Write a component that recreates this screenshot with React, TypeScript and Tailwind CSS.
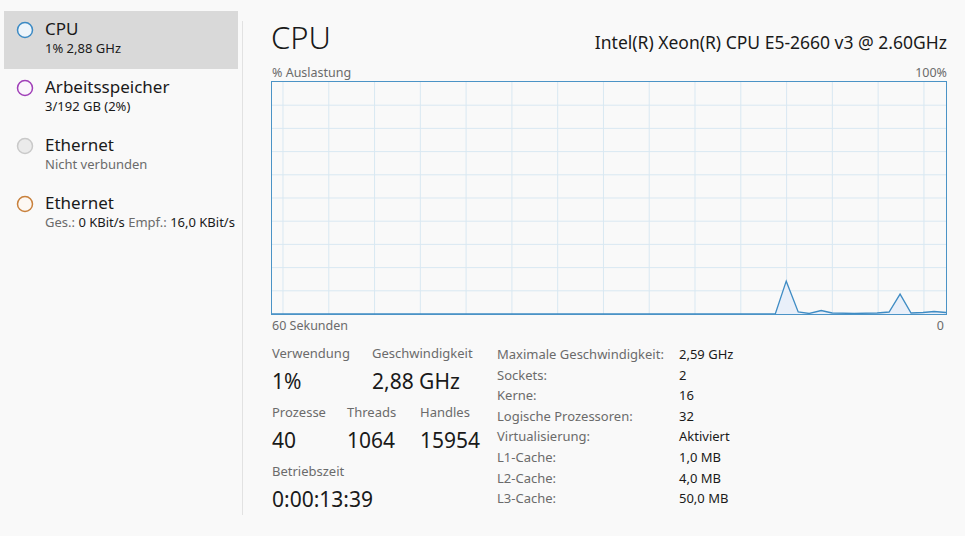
import React from 'react'

const font = { fontFamily: '"Noto Sans", "Open Sans", sans-serif' }

type Item = { title: string; sub: React.ReactNode; stroke: string; fill: string; active?: boolean }

const items: Item[] = [
  { title: 'CPU', sub: '1% 2,88 GHz', stroke: '#3b8ac4', fill: '#eef5fb', active: true },
  { title: 'Arbeitsspeicher', sub: '3/192 GB (2%)', stroke: '#a03fb8', fill: '#fbf6fc' },
  { title: 'Ethernet', sub: <span className="text-[#6b6b6b]">Nicht verbunden</span>, stroke: '#c9c9c9', fill: '#ebebeb' },
  {
    title: 'Ethernet',
    sub: (
      <>
        <span className="text-[#6b6b6b]">Ges.:</span> 0 KBit/s <span className="text-[#6b6b6b]">Empf.:</span> 16,0 KBit/s
      </>
    ),
    stroke: '#c8803c',
    fill: '#fdf8f3',
  },
]

const specs: [string, string][] = [
  ['Maximale Geschwindigkeit:', '2,59 GHz'],
  ['Sockets:', '2'],
  ['Kerne:', '16'],
  ['Logische Prozessoren:', '32'],
  ['Virtualisierung:', 'Aktiviert'],
  ['L1-Cache:', '1,0 MB'],
  ['L2-Cache:', '4,0 MB'],
  ['L3-Cache:', '50,0 MB'],
]

// Punkte der Auslastungskurve (x, y) relativ zum Diagramm 675x233
const pts: [number, number][] = [
  [0, 233], [504, 233], [515, 200], [527, 231], [538, 232.5], [550, 229.5], [561, 232],
  [583, 232.5], [606, 232], [618, 231], [629, 213], [640, 232], [652, 231.5], [663, 230.5], [675, 231.5],
]

function Chart() {
  const W = 675
  const H = 233
  const vlines = Array.from({ length: 15 }, (_, i) => 11 + i * 45.85)
  const hlines = Array.from({ length: 9 }, (_, i) => (i + 1) * (H / 10))
  const line = pts.map(([x, y]) => `${x},${y}`).join(' ')
  return (
    <div className="relative h-[234px] w-full border border-[#4b93c6]">
      <svg className="absolute inset-0 h-full w-full" viewBox={`0 0 ${W} ${H}`} preserveAspectRatio="none">
        {vlines.map((x) => (
          <line key={'v' + x} x1={x} y1={0} x2={x} y2={H} stroke="#d9e8f2" strokeWidth={1} />
        ))}
        {hlines.map((y) => (
          <line key={'h' + y} x1={0} y1={y} x2={W} y2={y} stroke="#d9e8f2" strokeWidth={1} />
        ))}
        <polygon points={`${line} ${W},${H} 0,${H}`} fill="#e9eff9" />
        <polyline points={line} fill="none" stroke="#3f8cc4" strokeWidth={1.3} />
      </svg>
    </div>
  )
}

function Stat({ label, value, className = '' }: { label: string; value: string; className?: string }) {
  return (
    <div className={className}>
      <div className="text-[13px] leading-[16px] text-[#6b6b6b]">{label}</div>
      <div className="mt-[7px] text-[21px] leading-[26px] text-[#1a1a1a]">{value}</div>
    </div>
  )
}

export default function App() {
  return (
    <div className="flex h-[536px] w-[965px] overflow-hidden bg-[#f9f9f9] text-[#1a1a1a]" style={font}>
      {/* Seitenleiste */}
      <div className="w-[242px] shrink-0 pl-[4px] pt-[11px]">
        {items.map((it, i) => (
          <div
            key={i}
            className={`flex h-[58px] w-[234px] items-start gap-[11px] pl-[12px] pt-[7px] ${it.active ? 'bg-[#d9d9d9]' : ''}`}
          >
            <svg width="18" height="18" viewBox="0 0 18 18" className="mt-[3px] shrink-0">
              <circle cx="9" cy="9" r="7.5" fill={it.fill} stroke={it.stroke} strokeWidth="1.5" />
            </svg>
            <div className="min-w-0">
              <div className="text-[17px] leading-[22px]">{it.title}</div>
              <div className="whitespace-nowrap text-[13px] leading-[17px]">{it.sub}</div>
            </div>
          </div>
        ))}
      </div>

      <div className="my-[21px] w-px shrink-0 bg-[#e2e2e2]" />

      {/* Hauptbereich */}
      <div className="flex min-w-0 flex-1 flex-col pl-[28px] pr-[18px] pt-[17px]">
        <div className="flex items-end justify-between">
          <div className="text-[31px] font-light leading-[40px]">CPU</div>
          <div className="pb-[4px] text-[17.5px] leading-[22px]">Intel(R) Xeon(R) CPU E5-2660 v3 @ 2.60GHz</div>
        </div>
        <div className="mt-[8px] flex justify-between pl-[1px] text-[12.5px] leading-[16px] text-[#6b6b6b]">
          <span>% Auslastung</span>
          <span>100%</span>
        </div>
        <Chart />
        <div className="mt-[3px] flex justify-between pl-[1px] text-[12.5px] leading-[16px] text-[#6b6b6b]">
          <span>60 Sekunden</span>
          <span className="pr-[3px]">0</span>
        </div>

        <div className="mt-[11px] flex pl-[1px]">
          <div className="w-[225px] shrink-0">
            <div className="flex">
              <Stat label="Verwendung" value="1%" className="w-[100px]" />
              <Stat label="Geschwindigkeit" value="2,88 GHz" />
            </div>
            <div className="mt-[10px] flex">
              <Stat label="Prozesse" value="40" className="w-[75px]" />
              <Stat label="Threads" value="1064" className="w-[73px]" />
              <Stat label="Handles" value="15954" />
            </div>
            <Stat label="Betriebszeit" value="0:00:13:39" className="mt-[10px]" />
          </div>
          <div className="-mt-[1px] flex flex-col text-[13px] leading-[20.6px]">
            {specs.map(([k, v]) => (
              <div key={k} className="flex">
                <span className="w-[182px] text-[#6b6b6b]">{k}</span>
                <span>{v}</span>
              </div>
            ))}
          </div>
        </div>
      </div>
    </div>
  )
}
